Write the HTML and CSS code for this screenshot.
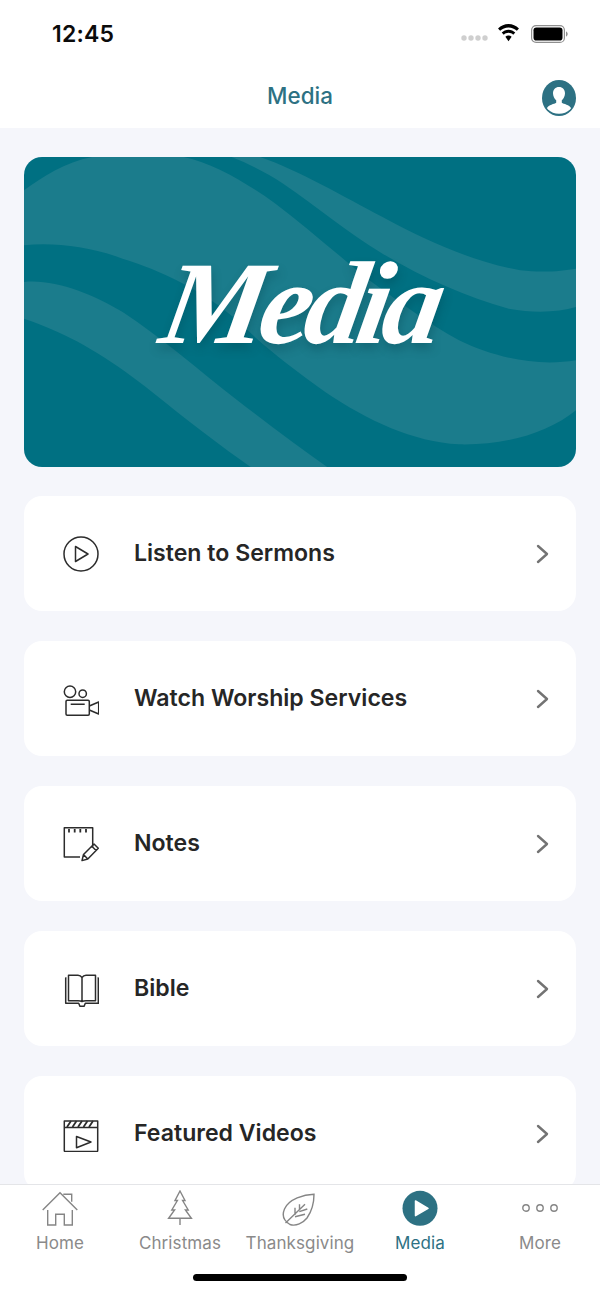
FILE: index.html
```html
<!DOCTYPE html>
<html lang="en">
<head>
<meta charset="utf-8">
<title>Media</title>
<link rel="stylesheet" href="styles.css">
</head>
<body>
<div class="app">
  <header class="top">
    <div class="status">
      <span class="time">12:45</span>
      <div class="status-icons">
        <svg class="signal" viewBox="0 0 27 6"><circle cx="3" cy="3" r="2.7"/><circle cx="10" cy="3" r="2.7"/><circle cx="17" cy="3" r="2.7"/><circle cx="24" cy="3" r="2.7"/></svg>
        <svg class="wifi" viewBox="0 0 22 17"><path d="M11 3.200c3.100 0 5.900 1.200 8 3.200l2-2.100C18.200 1.600 14.800 0 11 0S3.800 1.600 1 4.300l2 2.100c2.100-2 4.900-3.200 8-3.200z"/><path d="M11 8.300c1.700 0 3.300.7 4.500 1.800l2-2.100C15.800 6.300 13.500 5.300 11 5.300S6.200 6.300 4.500 8l2 2.100c1.200-1.100 2.800-1.800 4.500-1.800z"/><path d="M11 10.800c-1.100 0-2.200.4-3 1.200l3 4.500 3-4.500c-.8-.8-1.900-1.200-3-1.200z"/></svg>
        <svg class="battery" viewBox="0 0 37 18"><rect x=".6" y=".6" width="32.800" height="16.800" rx="4.500" fill="none" stroke="#8f8f8f" stroke-width="1.200"/><rect x="2.500" y="2.500" width="29" height="13" rx="2.800"/><path d="M35 6.500c1 .3 1.700 1.300 1.700 2.500s-.7 2.200-1.700 2.500z" fill="#8f8f8f"/></svg>
      </div>
    </div>
    <div class="navbar">
      <h1 class="nav-title">Media</h1>
      <svg class="avatar" viewBox="0 0 34 36"><defs><clipPath id="avatar-clip"><circle cx="17" cy="18" r="15.800"/></clipPath></defs><ellipse cx="17" cy="18" rx="17" ry="18" fill="#2d7183"/><path clip-path="url(#avatar-clip)" d="M17 7c-3.600 0-6 2.700-6 6.300 0 2.900 1.400 5.600 3.200 7v2.400c-1.800 1.200-7.700 2.100-9.200 5.300V36h24v-8c-1.500-3.200-7.400-4.100-9.200-5.300v-2.400c1.800-1.400 3.200-4.100 3.200-7C23 9.700 20.600 7 17 7z" fill="#fff"/></svg>
    </div>
  </header>

  <main class="content">
    <section class="banner">
      <svg class="waves" viewBox="62 20 1444 930" preserveAspectRatio="none">
        <path class="wave" d="M62 120C110 80 170 35 240 20H480C560 40 640 95 720 160C800 230 880 310 960 385C1040 450 1120 520 1200 570C1290 620 1400 650 1506 630V780C1430 850 1320 885 1200 882C1080 875 960 810 850 725C760 650 690 590 620 510C530 420 420 360 320 325C240 290 140 275 62 285Z"/>
        <path class="wave" d="M605 20H680C780 60 900 140 1000 200C1120 275 1240 335 1360 360C1420 368 1470 362 1506 355V470C1460 485 1400 490 1330 475C1220 440 1110 385 1000 310C900 240 830 170 740 100C700 70 650 40 605 20Z"/>
        <path class="wave" d="M62 395C140 385 240 430 320 485C420 560 520 660 620 750C700 820 780 890 855 950H655C580 890 500 820 430 755C340 670 240 590 150 545C120 530 90 515 62 505Z"/>
      </svg>
      <span class="banner-title">Media</span>
    </section>

    <a class="row">
      <svg class="row-icon" viewBox="0 0 36 36"><circle cx="18" cy="18" r="17"/><path d="M12.500 10.500 25 18l-12.500 7.500z"/></svg>
      <span class="row-label">Listen to Sermons</span>
      <svg class="chev" viewBox="0 0 14 20"><path d="M2 2l9 8-9 8"/></svg>
    </a>
    <a class="row">
      <svg class="row-icon" viewBox="0 0 36 36"><circle cx="7" cy="10.700" r="5.700"/><circle cx="19.700" cy="12.700" r="3.700"/><rect x="3" y="19.300" width="23.300" height="15" rx="1.200"/><path d="M7.700 23.300h14M26.300 25l9.400-4v12l-9.400-4"/></svg>
      <span class="row-label">Watch Worship Services</span>
      <svg class="chev" viewBox="0 0 14 20"><path d="M2 2l9 8-9 8"/></svg>
    </a>
    <a class="row">
      <svg class="row-icon" viewBox="0 0 36 36"><path d="M17 31H1.300V1.700h28.400v19"/><path class="thick" d="M6 3v3.500M11.700 3v3.500M17.300 3v3.500M23 3v3.500"/><path d="M19 34.600l1.500-6.100L31 18l4.300 4.300L24.800 33zM20.500 28.500l4.300 4.500M28.800 20.200l4.300 4.300"/></svg>
      <span class="row-label">Notes</span>
      <svg class="chev" viewBox="0 0 14 20"><path d="M2 2l9 8-9 8"/></svg>
    </a>
    <a class="row">
      <svg class="row-icon" viewBox="0 0 36 36"><path d="M3.500 7H2.700v25.300h13l1.200 3h4.200l1.200-3h13V7h-.8"/><path d="M19 30.500V6.500c1-1.500 2.500-2.200 4-2.200h9.500v25.500H23c-1.500 0-3 .2-4 .7zM19 30.500V6.500C18 5 16.500 4.300 15 4.300H5.500v25.500H15c1.500 0 3 .2 4 .7z"/></svg>
      <span class="row-label">Bible</span>
      <svg class="chev" viewBox="0 0 14 20"><path d="M2 2l9 8-9 8"/></svg>
    </a>
    <a class="row">
      <svg class="row-icon" viewBox="0 0 36 36"><path d="M1.300 5h33.400v6.500H1.300zM1.300 11.500h33.400v23a1 1 0 0 1-1 1H2.300a1 1 0 0 1-1-1z"/><path class="thick" d="M4 11l4-6M9.500 11l4-6M15 11l4-6M20.500 11l4-6M26 11l4-6"/><path d="M13.500 20.500 28 26l-14.500 5.800z"/></svg>
      <span class="row-label">Featured Videos</span>
      <svg class="chev" viewBox="0 0 14 20"><path d="M2 2l9 8-9 8"/></svg>
    </a>
  </main>

  <nav class="tabs">
    <div class="tab-list">
      <a class="tab">
        <svg class="tab-icon" viewBox="0 0 36 36"><path d="M.7 20 18 2.700 35.300 20M21.300 4.300h8.400v7.400M5.700 20v15h8V24.300h8.600V35h8V20"/></svg>
        <span class="tab-label">Home</span>
      </a>
      <a class="tab">
        <svg class="tab-icon" viewBox="0 0 36 36"><path d="M18 1l5 9.500h-2.400l5.600 9.500h-2.800l6 8.300H6.600l6-8.300H9.800l5.600-9.500H13zM18 28.300V35"/></svg>
        <span class="tab-label">Christmas</span>
      </a>
      <a class="tab">
        <svg class="tab-icon" viewBox="0 0 36 36"><path d="M32 4.300C22 4.500 7 9 2.500 19-.5 26 2 31 8 34.500c6 2 13-1.500 17-6.500 5-7 7-16 7-23.700zM3.500 33 23 14.300M13 25v-7.300M13 26.700l10-2.400M17.300 21.700l8-2.700M17.500 20.200v-6"/></svg>
        <span class="tab-label">Thanksgiving</span>
      </a>
      <a class="tab tab-active">
        <svg class="tab-icon" viewBox="0 0 36 36"><circle class="disc" cx="18" cy="18.300" r="17.500"/><path class="tri" d="M13.500 11 26 18.300l-12.500 7.300z"/></svg>
        <span class="tab-label">Media</span>
      </a>
      <a class="tab">
        <svg class="tab-icon" viewBox="0 0 36 36"><circle cx="4" cy="18" r="3.200"/><circle cx="18" cy="18" r="3.200"/><circle cx="32" cy="18" r="3.200"/></svg>
        <span class="tab-label">More</span>
      </a>
    </div>
    <div class="home-indicator"></div>
  </nav>
</div>
</body>
</html>
```

FILE: styles.css
```css
* { box-sizing: border-box; }
html, body { margin: 0; padding: 0; }
body {
  width: 600px;
  height: 1299px;
  overflow: hidden;
  font-family: Inter, "Noto Sans", sans-serif;
  background: #fff;
}
.app {
  width: 600px;
  height: 1299px;
  display: flex;
  flex-direction: column;
  overflow: hidden;
}
.top { background: #fff; flex: none; height: 128px; }
.status {
  height: 64px;
  display: flex;
  justify-content: space-between;
  align-items: center;
  padding: 3px 32px 0 52px;
}
.time { font-size: 23px; font-weight: 600; color: #0b0b0b; letter-spacing: 0.2px; }
.status-icons { display: flex; align-items: center; gap: 9px; }
.signal { width: 27px; height: 6px; fill: #cfcfcf; margin-top: 8px; }
.wifi { width: 23px; height: 18px; fill: #000; margin-top: -1px; }
.battery { width: 37px; height: 18px; fill: #000; margin-left: 2px; }
.navbar {
  position: relative;
  height: 64px;
  display: flex;
  align-items: center;
  justify-content: center;
}
.nav-title { margin: 0 0 1px; font-size: 22.4px; font-weight: 500; color: #2d7183; }
.avatar { position: absolute; right: 24px; top: 16px; width: 34px; height: 36px; }
.content {
  flex: 1;
  min-height: 0;
  overflow: hidden;
  background: #f5f6fb;
  padding: 29px 24px 0;
  display: flex;
  flex-direction: column;
  gap: 30px;
}
.banner {
  position: relative;
  flex: none;
  height: 310px;
  margin-bottom: -1px;
  border-radius: 18px;
  overflow: hidden;
  background: #007082;
  display: flex;
  align-items: center;
  justify-content: center;
}
.waves { position: absolute; inset: 0; width: 100%; height: 100%; }
.wave { fill: #1b7c8c; }
.banner-title {
  position: relative;
  font-family: "Liberation Serif", serif;
  font-style: italic;
  font-weight: 700;
  font-size: 118px;
  line-height: 1;
  color: #fff;
  letter-spacing: -7px;
  transform: translate(1px, -8px) skewX(-10deg);
  text-shadow: 2px 6px 10px rgba(0, 60, 70, 0.3);
}
.row {
  flex: none;
  height: 115px;
  background: #fff;
  border-radius: 18px;
  display: flex;
  align-items: center;
  padding: 0 26px 0 39px;
}
.row-icon {
  flex: none;
  width: 36px;
  height: 36px;
  fill: none;
  stroke: #2c2c2c;
  stroke-width: 1.5;
  stroke-linejoin: round;
}
.row-icon .thick { stroke-width: 1.8; stroke-linejoin: miter; }
.row-label {
  flex: 1;
  margin: 0 0 2px 35px;
  font-size: 23.1px;
  font-weight: 600;
  color: #262626;
}
.chev {
  flex: none;
  width: 14px;
  height: 20px;
  fill: none;
  stroke: #737373;
  stroke-width: 2.4;
  stroke-linecap: round;
  stroke-linejoin: round;
}
.tabs {
  flex: none;
  height: 115px;
  background: #fff;
  border-top: 1px solid #e4e5e8;
  display: flex;
  flex-direction: column;
  align-items: center;
}
.tab-list { width: 100%; display: grid; grid-template-columns: repeat(5, 1fr); padding-top: 5px; }
.tab {
  display: flex;
  flex-direction: column;
  align-items: center;
  gap: 6px;
  color: #8a8a8a;
}
.tab-icon {
  width: 36px;
  height: 36px;
  fill: none;
  stroke: #858585;
  stroke-width: 1.4;
}
.tab-label { font-size: 17px; line-height: 22px; font-weight: 400; white-space: nowrap; letter-spacing: 0.1px; }
.tab-active { color: #2d7183; }
.disc { fill: #2d7183; stroke: none; }
.tri { fill: #fff; stroke: #fff; stroke-width: 1.5; stroke-linejoin: round; }
.home-indicator {
  width: 214px;
  height: 7px;
  margin-top: 20px;
  border-radius: 4px;
  background: #000;
}
```
